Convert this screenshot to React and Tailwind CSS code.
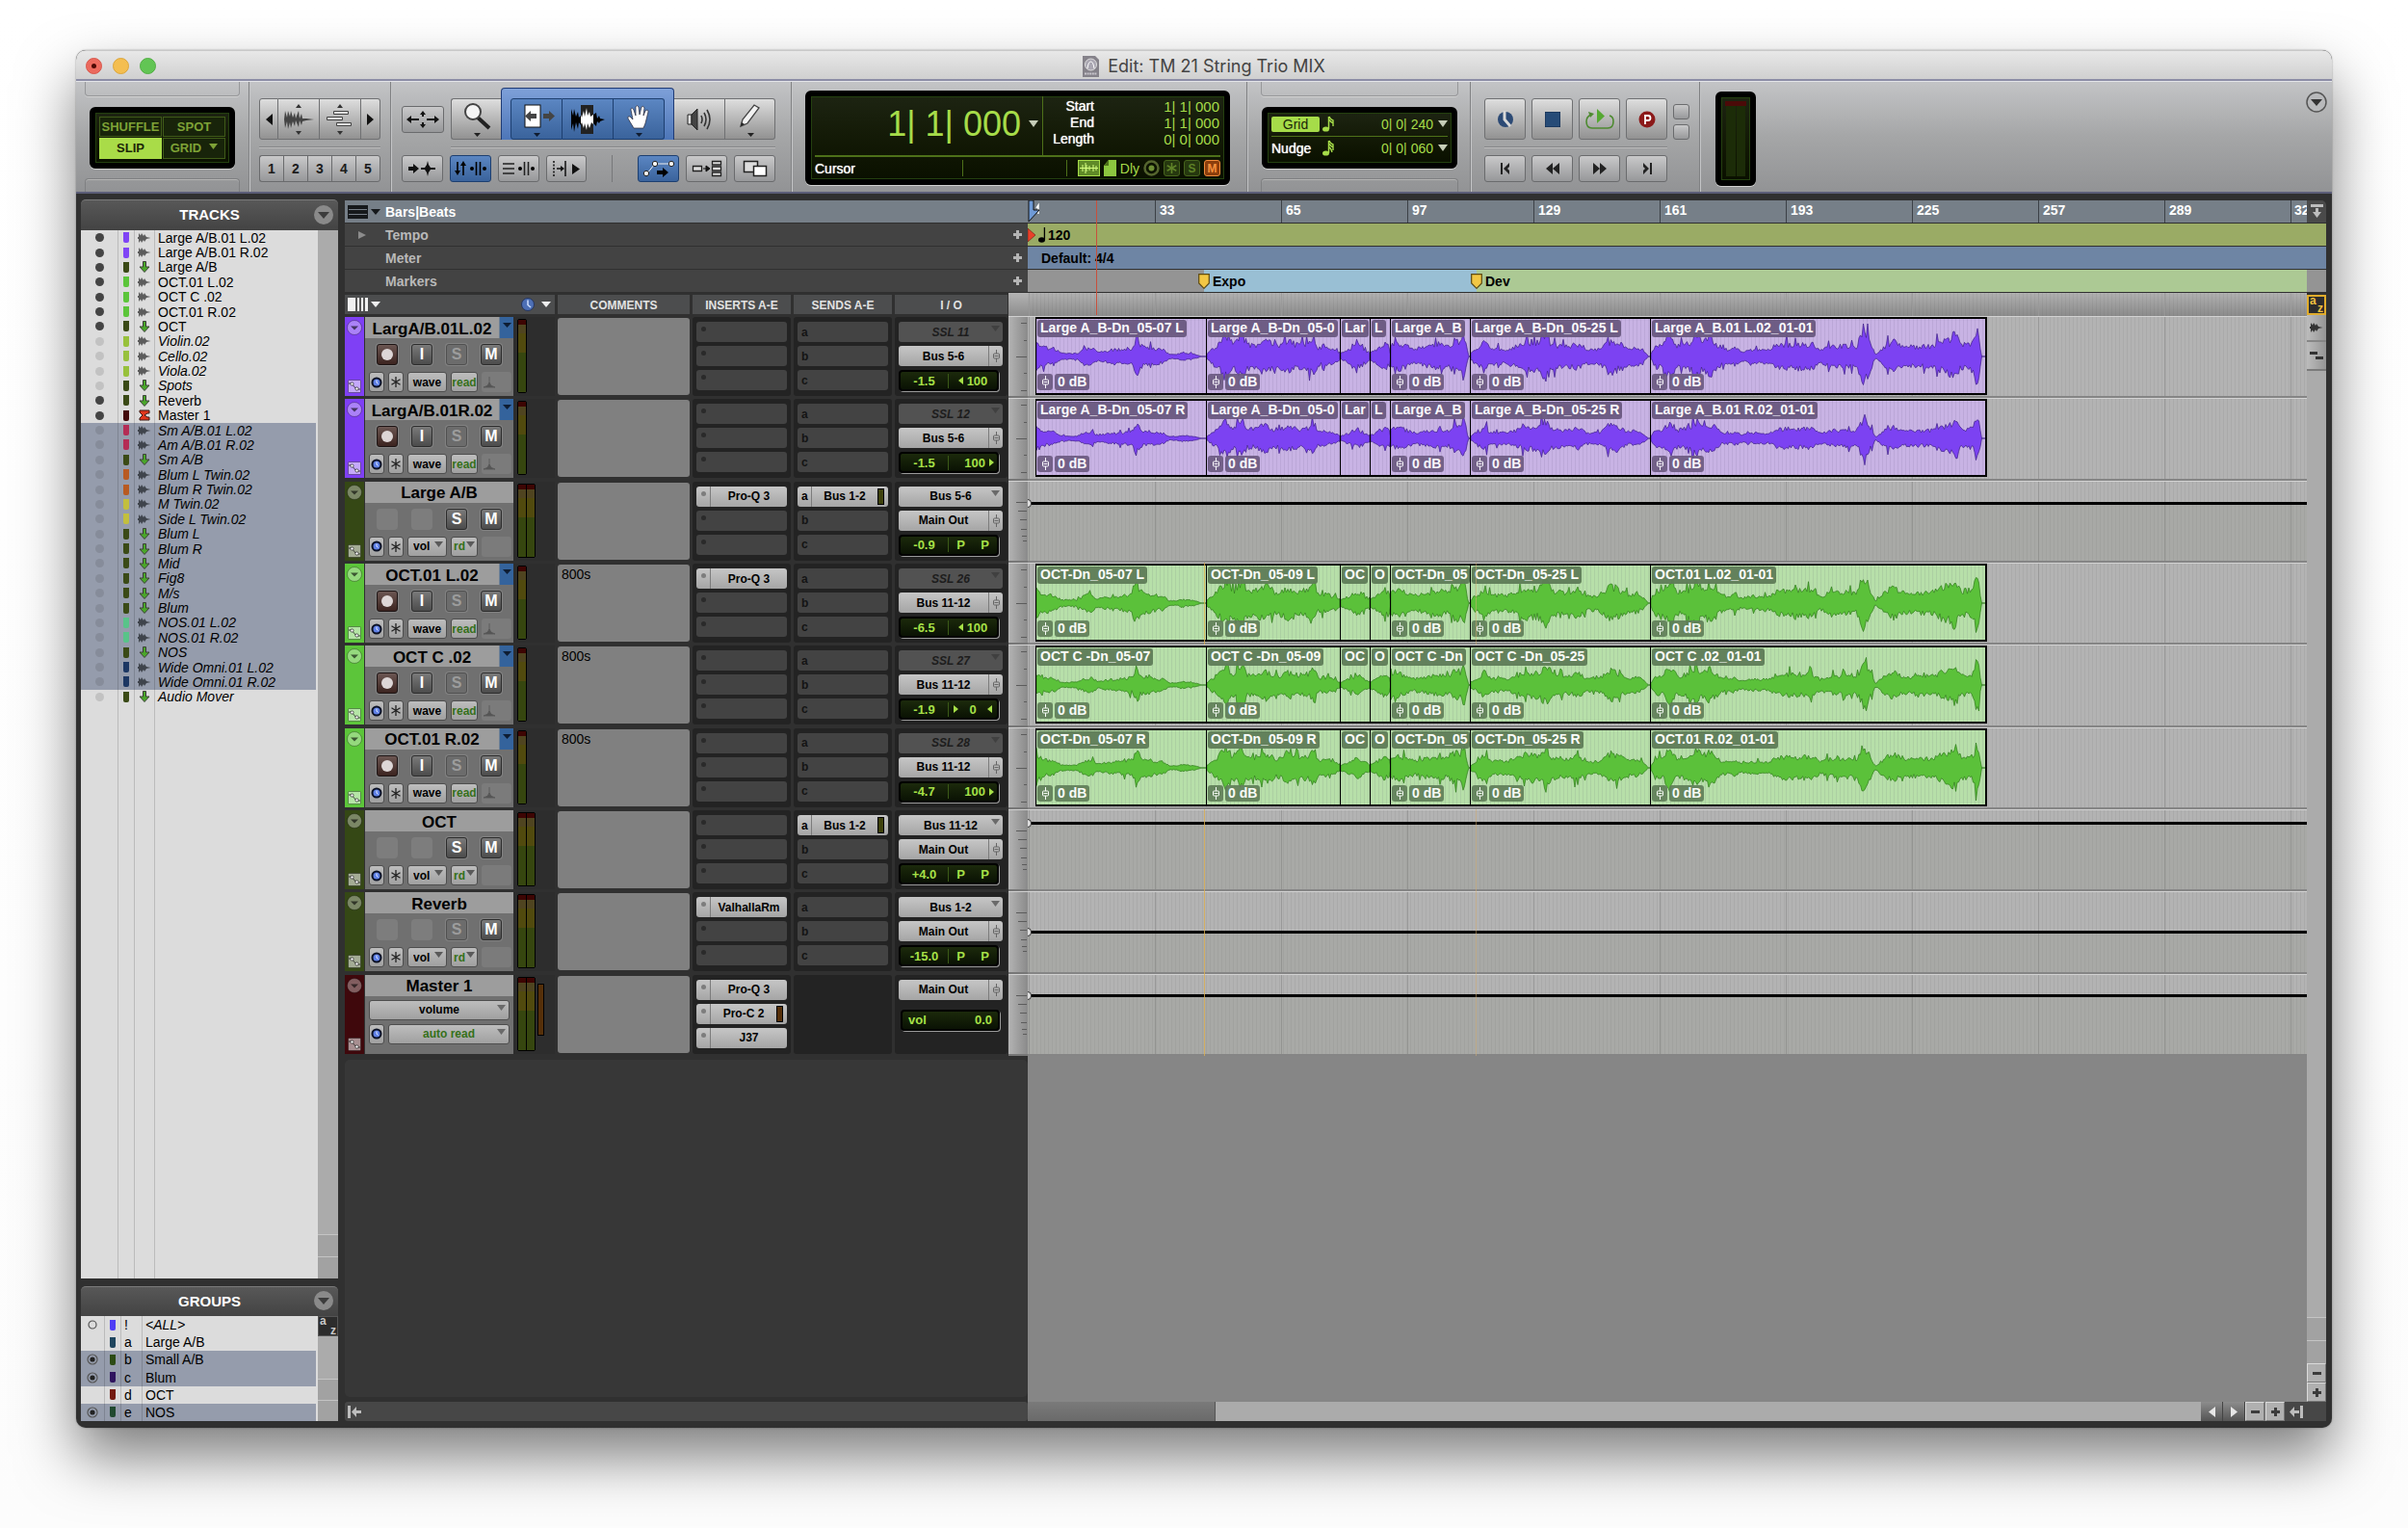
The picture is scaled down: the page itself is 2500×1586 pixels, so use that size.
import React, { useState } from "react";
import clsx from "clsx";

// ── Shared class strings ─────────────────────────────────────────────────────
const KEY = "flex items-center justify-center rounded-[3px] border border-[#6f7072] bg-linear-to-b from-[#dedede] to-[#929292] text-[#222]";
const KEY_SM = "flex items-center justify-center rounded-[3px] border border-[#6a6b6d] bg-linear-to-b from-[#c9c9ca] to-[#97989a] text-[#1c1c1c]";
const KEY_BLUE = "flex items-center justify-center rounded-[3px] border border-[#1d3f70] bg-linear-to-b from-[#5b86c2] to-[#3a639c] text-black";
const LCD = "rounded-[6px] border-[6px] border-black bg-linear-to-b from-[#1d2412] to-[#0a1000] shadow-[0_1px_0_#d0d0d0,inset_0_0_0_1px_#24400f]";
const CHIP = "rounded-[3px] bg-linear-to-b from-[#c6c6c6] to-[#a5a5a5] text-[12px] leading-none font-bold text-black";

// ── Data ─────────────────────────────────────────────────────────────────────
const GREEN = "#3a4a16";
const trackList = [
  ["Large A/B.01 L.02", "#7f44f5", "audio", "on"],
  ["Large A/B.01 R.02", "#7f44f5", "audio", "on"],
  ["Large A/B", GREEN, "aux", "on"],
  ["OCT.01 L.02", "#5cc53a", "audio", "on"],
  ["OCT C .02", "#5cc53a", "audio", "on"],
  ["OCT.01 R.02", "#5cc53a", "audio", "on"],
  ["OCT", GREEN, "aux", "on"],
  ["Violin.02", "#97c13c", "audio", "off"],
  ["Cello.02", "#97c13c", "audio", "off"],
  ["Viola.02", "#97c13c", "audio", "off"],
  ["Spots", GREEN, "aux", "off"],
  ["Reverb", GREEN, "aux", "on"],
  ["Master 1", "#430a0c", "master", "on"],
  ["Sm A/B.01 L.02", "#b42c55", "audio", "sel"],
  ["Am A/B.01 R.02", "#b42c55", "audio", "sel"],
  ["Sm A/B", GREEN, "aux", "sel"],
  ["Blum L Twin.02", "#b85a22", "audio", "sel"],
  ["Blum R Twin.02", "#b85a22", "audio", "sel"],
  ["M Twin.02", "#c2bf3e", "audio", "sel"],
  ["Side L Twin.02", "#c2bf3e", "audio", "sel"],
  ["Blum L", GREEN, "aux", "sel"],
  ["Blum R", GREEN, "aux", "sel"],
  ["Mid", GREEN, "aux", "sel"],
  ["Fig8", GREEN, "aux", "sel"],
  ["M/s", GREEN, "aux", "sel"],
  ["Blum", GREEN, "aux", "sel"],
  ["NOS.01 L.02", "#58c389", "audio", "sel"],
  ["NOS.01 R.02", "#58c389", "audio", "sel"],
  ["NOS", GREEN, "aux", "sel"],
  ["Wide Omni.01 L.02", "#1c3763", "audio", "sel"],
  ["Wide Omni.01 R.02", "#1c3763", "audio", "sel"],
  ["Audio Mover", GREEN, "aux", "off"],
];

const groups = [
  { key: "!", name: "<ALL>", color: "#4f3df5", mark: "empty", selected: false },
  { key: "a", name: "Large A/B", color: "#20465e", mark: "", selected: false },
  { key: "b", name: "Small A/B", color: "#2c4b14", mark: "full", selected: true },
  { key: "c", name: "Blum", color: "#2f145e", mark: "full", selected: true },
  { key: "d", name: "OCT", color: "#741a10", mark: "", selected: false },
  { key: "e", name: "NOS", color: "#20492f", mark: "full", selected: true },
];

const PURPLE_CLIPS = { bg: "bg-[#c8b3e4]", tag: "bg-[#6a5980]", wave: "#7c42f2", edge: "#3c1c86" };
const GREEN_CLIPS = { bg: "bg-[#b7dfa9]", tag: "bg-[#5f7d58]", wave: "#5bc13a", edge: "#2d7a18" };

const tracks = [
  { name: "LargA/B.01L.02", kind: "audio", strip: "bg-[#7f40f5]", input: "SSL 11", output: "Bus 5-6", vol: "-1.5", pan: "left", clips: PURPLE_CLIPS, seed: 3, gain: 1.1,
    names: ["Large A_B-Dn_05-07 L", "Large A_B-Dn_05-0", "Lar", "L", "Large A_B", "Large A_B-Dn_05-25 L", "Large A_B.01 L.02_01-01"] },
  { name: "LargA/B.01R.02", kind: "audio", strip: "bg-[#7f40f5]", input: "SSL 12", output: "Bus 5-6", vol: "-1.5", pan: "right", clips: PURPLE_CLIPS, seed: 8, gain: 0.85,
    names: ["Large A_B-Dn_05-07 R", "Large A_B-Dn_05-0", "Lar", "L", "Large A_B", "Large A_B-Dn_05-25 R", "Large A_B.01 R.02_01-01"] },
  { name: "Large A/B", kind: "aux", strip: "bg-[#354815]", inserts: ["Pro-Q 3"], send: "Bus 1-2", input: "Bus 5-6", output: "Main Out", vol: "-0.9", level: 21 },
  { name: "OCT.01 L.02", kind: "audio", strip: "bg-[#5cc53a]", comment: "800s", inserts: ["Pro-Q 3"], input: "SSL 26", output: "Bus 11-12", vol: "-6.5", pan: "left", clips: GREEN_CLIPS, seed: 14, gain: 1.15,
    names: ["OCT-Dn_05-07 L", "OCT-Dn_05-09 L", "OC", "O", "OCT-Dn_05", "OCT-Dn_05-25 L", "OCT.01 L.02_01-01"] },
  { name: "OCT C .02", kind: "audio", strip: "bg-[#5cc53a]", comment: "800s", input: "SSL 27", output: "Bus 11-12", vol: "-1.9", pan: "center", clips: GREEN_CLIPS, seed: 27, gain: 0.95,
    names: ["OCT C -Dn_05-07", "OCT C -Dn_05-09", "OC", "O", "OCT C -Dn", "OCT C -Dn_05-25", "OCT C .02_01-01"] },
  { name: "OCT.01 R.02", kind: "audio", strip: "bg-[#5cc53a]", comment: "800s", input: "SSL 28", output: "Bus 11-12", vol: "-4.7", pan: "right", clips: GREEN_CLIPS, seed: 31, gain: 1,
    names: ["OCT-Dn_05-07 R", "OCT-Dn_05-09 R", "OC", "O", "OCT-Dn_05", "OCT-Dn_05-25 R", "OCT.01 R.02_01-01"] },
  { name: "OCT", kind: "aux", strip: "bg-[#354815]", send: "Bus 1-2", input: "Bus 11-12", output: "Main Out", vol: "+4.0", level: 12 },
  { name: "Reverb", kind: "aux", strip: "bg-[#354815]", dimSolo: true, inserts: ["ValhallaRm"], input: "Bus 1-2", output: "Main Out", vol: "-15.0", level: 40 },
  { name: "Master 1", kind: "master", strip: "bg-[#3f080c]", inserts: ["Pro-Q 3", "Pro-C 2", "J37"], output: "Main Out", level: 20 },
];

// Clip widths in px plus loudness envelopes as [x, amplitude]
const clipShapes = [
  { w: "w-[177px]", width: 177, env: [[0, 15], [4, 10], [18, 9], [26, 3], [42, 3], [50, 8], [58, 9], [64, 4], [72, 6], [90, 8], [100, 10], [104, 24], [108, 12], [120, 9], [132, 7], [138, 2], [146, 2], [150, 4], [165, 2], [170, 0], [176, 0]] },
  { w: "w-[139px]", width: 139, env: [[0, 2], [6, 9], [12, 14], [20, 26], [28, 13], [37, 28], [42, 14], [50, 13], [60, 20], [72, 11], [84, 17], [96, 13], [106, 15], [112, 22], [115, 9], [122, 10], [132, 7], [138, 4]] },
  { w: "w-[31px]", width: 31, env: [[0, 3], [8, 7], [18, 13], [24, 7], [30, 4]] },
  { w: "w-[21px]", width: 21, env: [[0, 4], [8, 9], [14, 14], [20, 11]] },
  { w: "w-[83px]", width: 83, env: [[0, 13], [8, 15], [16, 12], [24, 8], [36, 11], [52, 13], [60, 11], [66, 18], [72, 18], [76, 26], [79, 12], [80, 0], [82, 0]] },
  { w: "w-[187px]", width: 187, env: [[0, 3], [8, 9], [14, 17], [20, 9], [36, 8], [46, 11], [58, 17], [70, 16], [78, 26], [84, 14], [100, 11], [112, 15], [120, 8], [132, 8], [146, 19], [154, 15], [164, 9], [172, 11], [180, 5], [184, 0], [186, 0]] },
  { w: "w-[350px]", width: 350, env: [[0, 2], [5, 13], [12, 12], [20, 27], [27, 11], [34, 14], [41, 16], [48, 26], [53, 14], [61, 22], [68, 15], [72, 9], [81, 7], [88, 10], [93, 5], [105, 7], [124, 7], [128, 12], [138, 14], [168, 14], [176, 7], [185, 11], [206, 12], [213, 10], [220, 28], [225, 22], [230, 10], [233, 1], [239, 8], [246, 14], [253, 17], [260, 11], [279, 11], [293, 12], [303, 18], [310, 20], [316, 26], [322, 13], [334, 14], [338, 30], [341, 20], [343, 0], [349, 0]] },
];

function envelopeAt(env, x) {
  for (let i = 1; i < env.length; i++) {
    if (x <= env[i][0]) {
      const [x0, a0] = env[i - 1];
      const [x1, a1] = env[i];
      return a0 + ((a1 - a0) * (x - x0)) / (x1 - x0);
    }
  }
  return 0;
}

function wavePath(env, width, seed, gain) {
  let s = seed * 7919 + 13;
  const rnd = () => {
    s = (s * 16807) % 2147483647;
    return s / 2147483647;
  };
  const top = [];
  const bottom = [];
  for (let x = 0; x <= width; x += 1.5) {
    const a = envelopeAt(env, x) * gain;
    const spike = rnd() > 0.92 ? 1.5 : 1;
    const up = a === 0 ? 0 : a * (0.56 + rnd() * 0.42) * spike + 0.5;
    const down = a === 0 ? 0 : a * (0.54 + rnd() * 0.42) * spike + 0.5;
    top.push(`${x} ${(40 - Math.min(up, 34)).toFixed(1)}`);
    bottom.unshift(`${x} ${(40 + Math.min(down, 34)).toFixed(1)}`);
  }
  return `M${top.join("L")}L${bottom.join("L")}Z`;
}

// ── Icons ────────────────────────────────────────────────────────────────────
function Icon({ w, h, children, className }) {
  return (
    <svg width={w} height={h} viewBox={`0 0 ${w} ${h}`} className={className} aria-hidden="true">
      {children}
    </svg>
  );
}

const Down = ({ w = 10, h = 6, className }) => (
  <Icon w={w} h={h} className={className}><path d={`M0 0H${w}L${w / 2} ${h}Z`} fill="currentColor" /></Icon>
);

const PanLeft = () => <Icon w={5} h={8}><path d="M5 0V8L0 4Z" fill="currentColor" /></Icon>;
const PanRight = () => <Icon w={5} h={8}><path d="M0 0V8L5 4Z" fill="currentColor" /></Icon>;

const CircleDown = () => (
  <Icon w={20} h={20}><circle cx="10" cy="10" r="10" fill="#8a8a8a" /><path d="M4 7H16L10 14Z" fill="#3c3c3c" /></Icon>
);

const WaveIcon = ({ color = "#555" }) => (
  <Icon w={14} h={10}><path d="M1 0L3 2.500L4 0L6 3L7 1L9 4L13.500 5L9 6L7 9L6 7L4 10L3 7.500L1 10V6H0V4H1Z" fill={color} /></Icon>
);

function TypeIcon({ kind, selected }) {
  if (kind === "audio") return <WaveIcon color={selected ? "#3f444c" : "#5c5c5c"} />;
  if (kind === "master") return <Icon w={12} h={12}><path d="M1 1H11V4H9L6 6L9 8H11V11H1V9L4 6L1 3Z" fill="#e0361c" stroke="#3a1a14" /></Icon>;
  return <Icon w={12} h={12}><path d="M4.500 .5H7.500V6H11L6 11.500L1 6H4.500Z" fill="#4aa62a" stroke="#3c4038" /></Icon>;
}

const Fader = ({ color = "#555" }) => (
  <Icon w={7} h={13}><path d="M3.500 0V4M3.500 9V13M1.500 6.500H5.500" stroke={color} /><rect x=".5" y="4" width="6" height="5" rx="1" fill="none" stroke={color} /></Icon>
);

const Clock = ({ size = 12 }) => (
  <svg width={size} height={size} viewBox="0 0 12 12" aria-hidden="true"><circle cx="6" cy="6" r="4.500" fill="#5f80e6" stroke="#0a1024" strokeWidth="2" /><path d="M6 3.500V6L7.500 7.500" stroke="#e4ecff" fill="none" /></svg>
);

const Note = ({ flags = 1 }) => (
  <Icon w={12} h={17}>
    <ellipse cx="3.500" cy="14" rx="3.500" ry="2.600" fill="currentColor" />
    <path d="M6.500 14V1" stroke="currentColor" strokeWidth="1.500" />
    {flags > 0 && <path d="M7 1Q8 4 11 5V8M7 4.500Q8 6 11 8V11" stroke="currentColor" fill="none" strokeWidth="1.400" />}
    {flags > 1 && <path d="M7 8Q9 9 10 13" stroke="currentColor" fill="none" strokeWidth="1.400" />}
  </Icon>
);

// ── Toolbar ──────────────────────────────────────────────────────────────────
const NotchTop = () => <div className="h-[15px] rounded-b-[4px] border border-t-0 border-[#97989a] shadow-[0_1px_0_#d2d2d2]" />;
const NotchBottom = () => <div className="h-[14px] rounded-t-[4px] border border-b-0 border-[#7f8082] shadow-[inset_0_1px_0_#b5b5b5]" />;
const Groove = () => <div className="my-[7px] h-[2px] border-b border-[#bdbdbd] bg-[#868789]" />;

function EditModes() {
  const [mode, setMode] = useState("SLIP");
  return (
    <section aria-label="Edit mode" className="flex w-[180px] shrink-0 flex-col justify-between border-r border-[#808183] px-[9px] shadow-[1px_0_0_#c4c5c7]">
      <NotchTop />
      <div className={clsx(LCD, "mx-[5px] h-[64px] p-1")}>
        <div className="grid h-full grid-cols-2 grid-rows-2 gap-px">
          {["SHUFFLE", "SPOT", "SLIP", "GRID"].map((m) => (
            <button key={m} aria-pressed={mode === m} onClick={() => setMode(m)}
              className={clsx("flex items-center justify-center gap-2 border text-[13px] font-bold leading-none",
                mode === m ? "border-[#a9dc48] bg-[#a9dc48] text-[#1c2608]" : "border-[#3f5a18] bg-[#18240a] text-[#7ea236]")}>
              {m}
              {m === "GRID" && <Down w={9} h={6} className="mb-1" />}
            </button>
          ))}
        </div>
      </div>
      <NotchBottom />
    </section>
  );
}

function ZoomControls() {
  return (
    <section aria-label="Zoom" className="w-[147px] shrink-0 border-r border-[#808183] pt-[17px] pr-[10px] pl-[10px] shadow-[1px_0_0_#c4c5c7]">
      <div className="flex h-[43px]">
        <button aria-label="Zoom out" className={clsx(KEY, "w-[20px] rounded-r-none")}><Icon w={7} h={12}><path d="M7 0V12L0 6Z" fill="#111" /></Icon></button>
        <button aria-label="Audio zoom" className={clsx(KEY, "flex-1 rounded-none border-l-0")}>
          <Icon w={32} h={34}>
            <path d="M13 5L16 1L19 5ZM13 29H19L16 33Z" fill="#333" />
            <path d="M2 8L4 15L5 8L7 14L8 8L10 15L12 10L13 16L16 8L17 16L19 11L20 16L24 16L32 17L24 18L20 19L19 23L17 18L16 25L13 18L12 24L10 19L8 26L7 20L5 27L4 19L2 26L1 17Z" fill="#444" />
          </Icon>
        </button>
        <button aria-label="MIDI zoom" className={clsx(KEY, "flex-1 rounded-none border-l-0")}>
          <Icon w={30} h={34}>
            <path d="M12 5L15 1L18 5ZM12 29H18L15 33Z" fill="#333" />
            <path d="M8.500 8.500H23.500V11.500H8.500ZM1.500 14.500H17.500V17.500H1.500ZM11.500 20.500H26.500V23.500H11.500Z" fill="#ddd" stroke="#444" />
          </Icon>
        </button>
        <button aria-label="Zoom in" className={clsx(KEY, "w-[20px] rounded-l-none border-l-0")}><Icon w={7} h={12}><path d="M0 0V12L7 6Z" fill="#111" /></Icon></button>
      </div>
      <Groove />
      <div className="flex h-[28px]">
        {[1, 2, 3, 4, 5].map((n) => (
          <button key={n} className={clsx(KEY_SM, "flex-1 rounded-none border-r-0 text-[14px] font-bold first:rounded-l-[3px] last:rounded-r-[3px] last:border-r")}>{n}</button>
        ))}
      </div>
    </section>
  );
}

function EditTools() {
  return (
    <section aria-label="Edit tools" className="w-[416px] shrink-0 border-r border-[#808183] pt-[6px] pr-[16px] pl-[11px] shadow-[1px_0_0_#c4c5c7]">
      <div className="flex h-[54px] items-end">
        <button aria-label="Zoom toggle" className={clsx(KEY_SM, "mr-[7px] mb-[7px] h-[28px] w-[44px]")}>
          <Icon w={36} h={20}><path d="M3 10H14M22 10H33" stroke="#111" strokeWidth="2" /><path d="M6 6L1 10L6 14ZM30 6L35 10L30 14ZM15 5L18 1L21 5ZM15 15L18 19L21 15Z" fill="#111" /><path d="M18 4V7M18 13V16" stroke="#111" strokeWidth="2" /></Icon>
        </button>
        <button aria-label="Zoomer tool" className={clsx(KEY, "h-[43px] w-[52px] rounded-r-none border-r-0")}>
          <Icon w={32} h={36}><path d="M17 16L29 27" stroke="#222" strokeWidth="4" /><circle cx="12" cy="10" r="8" fill="#f4f4f4" stroke="#444" strokeWidth="2" /><path d="M13 32H20L16.500 36Z" fill="#222" /></Icon>
        </button>
        <div className="flex h-[54px] w-[180px] items-end rounded-t-[4px] border border-b-0 border-[#1f3b75] bg-linear-to-b from-[#7ea0d8] to-[#4d76b8] px-[9px]">
          <button aria-label="Trim tool" className={clsx(KEY_BLUE, "h-[43px] flex-1 rounded-r-none")}>
            <Icon w={40} h={36}><rect x="8" y="3" width="16" height="23" fill="#fff" stroke="#111" /><path d="M8 14.500L14 9V12H20V17H14V20ZM39 14.500L33 9V12H27V17H33V20Z" fill="#444" /><path d="M17 32H24L20.500 36Z" fill="#101c30" /></Icon>
          </button>
          <button aria-label="Selector tool" className={clsx(KEY_BLUE, "h-[43px] flex-1 rounded-none border-l-0")}>
            <Icon w={36} h={32}>
              <rect x="11" y="1" width="13" height="30" fill="#222" />
              <path d="M1 5L3 12L4 5L6 13L8 8L9 14L11 12V22L9 19L8 26L6 19L4 29L3 20L1 27ZM24 11L27 9L28 15L30 12L31 15L36 16L31 18L30 20L28 18L27 23L24 20Z" fill="#000" />
              <path d="M11 11L12 14L14 7L15 13L17 4L18 12L20 8L21 13L24 11V21L22 19L20 25L18 20L17 27L15 20L14 25L12 19L11 21Z" fill="#fff" />
            </Icon>
          </button>
          <button aria-label="Grabber tool" className={clsx(KEY_BLUE, "h-[43px] flex-1 rounded-l-none border-l-0")}>
            <Icon w={26} h={36}><path d="M8 27L2 17Q1 14 4 15L7 18L5 8Q5 5 7.500 7L10 14L10 5Q11 2 13 5L14 13L16 5Q18 3 19 6L18 14L20 9Q23 7 23 10L20 22L18 27Z" fill="#fff" stroke="#223" strokeWidth=".7" /><path d="M10 32H17L13.500 36Z" fill="#101c30" /></Icon>
          </button>
        </div>
        <button aria-label="Scrubber tool" className={clsx(KEY, "h-[43px] w-[53px] rounded-none border-l-0")}>
          <Icon w={28} h={28}><path d="M2 9H6V19H2Z" fill="#ddd" stroke="#222" /><path d="M6 9L12 3V25L6 19Z" fill="#444" stroke="#222" /><path d="M16 10Q18 14 16 18M19 7Q23 14 19 21M22 4Q28 14 22 24" stroke="#333" fill="none" strokeWidth="1.600" /></Icon>
        </button>
        <button aria-label="Pencil tool" className={clsx(KEY, "h-[43px] w-[52px] rounded-l-none border-l-0")}>
          <Icon w={28} h={36}><path d="M4 25L6 18L18 3L23 6L11 22Z" fill="#f2f2f2" stroke="#444" strokeWidth="1.300" /><path d="M4 25L5 21L8 23Z" fill="#222" /><path d="M11 32H18L14.500 36Z" fill="#222" /></Icon>
        </button>
      </div>
      <div className="pl-[51px]"><Groove /></div>
      <div className="flex h-[28px] gap-[7px]">
        <button aria-label="Tab to transients" className={clsx(KEY_SM, "w-[43px]")}><Icon w={30} h={18}><path d="M1 7H6V4L12 9L6 14V11H1ZM14 8H18L20 5L21 1L22 5L24 8H29V10H24L22 13L21 17L20 13L18 10H14Z" fill="#111" /></Icon></button>
        <button aria-label="Link timeline and edit selection" className={clsx(KEY_BLUE, "w-[43px]")}><Icon w={34} h={18}><path d="M4 2V13M10 5V16M23.500 2V16M27.500 2V16" stroke="#000" strokeWidth="1.600" /><path d="M1 11H7L4 16ZM7 6H13L10 1Z" fill="#000" /><circle cx="19" cy="9" r="2" /><circle cx="32" cy="9" r="2" /></Icon></button>
        <button aria-label="Link track and edit selection" className={clsx(KEY_SM, "w-[43px]")}><Icon w={34} h={18}><path d="M1 4H13M1 9H13M1 14H13M23.500 2V16M27.500 2V16" stroke="#222" strokeWidth="1.600" /><circle cx="19" cy="9" r="2" /><circle cx="32" cy="9" r="2" /></Icon></button>
        <button aria-label="Insertion follows playback" className={clsx(KEY_SM, "w-[43px]")}><Icon w={32} h={18}><path d="M3 1V18" stroke="#111" strokeDasharray="2 1.500" strokeWidth="1.500" /><path d="M6 9H11M15 1V17" stroke="#111" strokeWidth="1.500" /><path d="M10 6L14 9L10 12ZM22 4L30 9.500L22 15Z" fill="#111" /></Icon></button>
        <div className="mx-[17px] w-[5px]"><div className="mx-auto h-full w-px bg-[#77787a]" /></div>
        <button aria-label="Automation follows edit" className={clsx(KEY_BLUE, "w-[43px]")}><Icon w={34} h={20}><path d="M4 16L13 5H30" stroke="#eee" fill="none" /><circle cx="4" cy="15" r="2.700" fill="#fff" stroke="#222" /><circle cx="13" cy="5" r="2.700" fill="#fff" stroke="#222" /><circle cx="30" cy="5" r="2.700" fill="#fff" stroke="#222" /><path d="M15 12H21V9L27 14L21 19V16H15Z" fill="#000" /></Icon></button>
        <button aria-label="Mirrored MIDI editing" className={clsx(KEY_SM, "w-[43px]")}><Icon w={32} h={18}><path d="M1.500 6.500H10.500V11.500H1.500ZM21.500 1.500H30.500V5H21.500ZM21.500 7H30.500V11H21.500ZM21.500 13H30.500V16.500H21.500Z" fill="#ddd" stroke="#222" strokeWidth="1.300" /><path d="M12 9H16M15 6L19 9L15 12Z" stroke="#111" fill="#111" /></Icon></button>
        <button aria-label="Layered editing" className={clsx(KEY_SM, "w-[43px]")}><Icon w={28} h={20}><path d="M2.500 2.500H16.500V13.500H2.500Z" fill="#ddd" stroke="#222" strokeWidth="1.500" /><path d="M12.500 7.500H25.500V17.500H12.500Z" fill="#fff" stroke="#222" strokeWidth="1.500" /></Icon></button>
      </div>
    </section>
  );
}

function Counter() {
  const rows = [["Start", "1| 1| 000"], ["End", "1| 1| 000"], ["Length", "0| 0| 000"]];
  return (
    <section aria-label="Counters" className="w-[473px] shrink-0 border-r border-[#808183] pt-[9px] pr-[17px] pl-[14px] shadow-[1px_0_0_#c4c5c7]">
      <div className={clsx(LCD, "flex h-[98px] flex-col px-1 text-[#a6dc49]")}>
        <div className="flex h-[63px] border-b-2 border-[#4d7019]">
          <div className="flex flex-1 items-center justify-end gap-2 border-r border-[#4d7019] pr-1 pb-1">
            <span className="text-[36px] leading-none">1| 1| 000</span>
            <button aria-label="Counter format" className="text-[#c6cdb8]"><Down w={10} h={7} /></button>
          </div>
          <dl className="w-[184px] py-[2px] pr-[1px] text-[15px] leading-[17px]">
            {rows.map(([k, v]) => (
              <div key={k} className="flex justify-between">
                <dt className="w-[53px] text-right text-[14px] text-white [text-shadow:0_0_1px_white]">{k}</dt>
                <dd>{v}</dd>
              </div>
            ))}
          </dl>
        </div>
        <div className="flex flex-1 items-center text-[14px] leading-none">
          <span className="w-[153px] text-white [text-shadow:0_0_1px_white]">Cursor</span>
          <span className="h-[17px] w-[109px] border-x border-[#4d7019]" />
          <div className="flex flex-1 items-center justify-end gap-1">
            <Icon w={23} h={17}><rect x=".5" y=".5" width="22" height="16" fill="#5f8a28" stroke="#a6dc49" /><path d="M2 8.500H21M5 5V12M8 3V14M9 5V12M12 6V11M16 5V12M19 6V11" stroke="#d6ff80" /></Icon>
            <Icon w={13} h={17}><path d="M5 0H13V17H0V6Z" fill="#8cc63f" /><path d="M5 0V6H0" fill="#4d7019" /></Icon>
            <span>Dly</span>
            <Icon w={17} h={17}><circle cx="8.500" cy="8.500" r="7" fill="none" stroke="#55652e" strokeWidth="2.500" /><circle cx="8.500" cy="8.500" r="3" fill="#6e8e34" /></Icon>
            <span className="flex h-[17px] w-[17px] items-center justify-center rounded-[3px] border border-[#46631c] bg-[#26380f] text-[#5f8228]"><Icon w={11} h={11}><path d="M5.500 0V11M.7 2.700L10.300 8.300M.7 8.300L10.300 2.700" stroke="currentColor" strokeWidth="1.600" /></Icon></span>
            <span className="flex h-[17px] w-[17px] items-center justify-center rounded-[3px] border border-[#46631c] bg-[#26380f] text-[12px] font-bold text-[#5f8228]">S</span>
            <span className="flex h-[17px] w-[17px] items-center justify-center rounded-[3px] border border-[#ef8a3a] bg-[#8c3e0c] text-[12px] font-bold text-[#f7913e]">M</span>
          </div>
        </div>
      </div>
    </section>
  );
}

function GridNudge() {
  return (
    <section aria-label="Grid and nudge" className="flex w-[232px] shrink-0 flex-col justify-between border-r border-[#808183] pr-[12px] pl-[14px] shadow-[1px_0_0_#c4c5c7]">
      <NotchTop />
      <div className={clsx(LCD, "mx-px flex h-[64px] flex-col px-1 pb-[3px] text-[14px] leading-none text-[#a6dc49]")}>
        <div className="flex flex-1 items-center border-b border-[#4d7019]">
          <button className="mr-[3px] h-[16px] w-[50px] rounded-[2px] bg-[#a6dc49] leading-none text-[#1b2608]">Grid</button>
          <Note />
          <select aria-label="Grid value" className="ml-auto appearance-none text-right"><option>0| 0| 240</option></select>
          <Down w={10} h={7} className="ml-[5px] text-[#c6cdb8]" />
        </div>
        <div className="flex flex-1 items-center">
          <span className="w-[53px] text-white [text-shadow:0_0_1px_white]">Nudge</span>
          <Note flags={2} />
          <select aria-label="Nudge value" className="ml-auto appearance-none text-right"><option>0| 0| 060</option></select>
          <Down w={10} h={7} className="ml-[5px] text-[#c6cdb8]" />
        </div>
      </div>
      <NotchBottom />
    </section>
  );
}

function Transport() {
  return (
    <section aria-label="Transport" className="flex w-[238px] shrink-0 gap-[6px] border-r border-[#808183] pt-[17px] pl-[14px] shadow-[1px_0_0_#c4c5c7]">
      <div className="w-[190px]">
        <div className="grid h-[43px] grid-cols-4 gap-[6px]">
          <button aria-label="Online" className={KEY}><Icon w={18} h={18}><circle cx="9" cy="9" r="8" fill="#2c4a75" /><path d="M8 0V9L14 16" stroke="#d8d8d8" strokeWidth="3" fill="none" /></Icon></button>
          <button aria-label="Stop" className={KEY}><Icon w={16} h={16}><rect width="16" height="16" fill="#264b77" stroke="#132a4a" /></Icon></button>
          <button aria-label="Play" className={KEY}><Icon w={32} h={22}><path d="M7 6Q2 8 2 13Q2 20 8 20H24Q30 20 30 13Q30 8 26 7" fill="none" stroke="#4d8a30" strokeWidth="1.600" /><path d="M4 3L10 5L6 9Z" fill="#4d8a30" /><path d="M13 0L21 7.500L13 15Z" fill="#55a832" /></Icon></button>
          <button aria-label="Record" className={KEY}><Icon w={18} h={18}><circle cx="9" cy="9" r="8.500" fill="#8c1a1a" /><path d="M7 14V5H10Q12.500 5 12.500 7.500Q12.500 10 10 10H7" fill="none" stroke="#fff" strokeWidth="1.800" /></Icon></button>
        </div>
        <Groove />
        <div className="grid h-[28px] grid-cols-4 gap-[6px]">
          <button aria-label="Return to zero" className={KEY_SM}><Icon w={10} h={12}><path d="M0 0H2V12H0ZM9 0V4L7 6L9 8V12L3 6Z" fill="#222" /></Icon></button>
          <button aria-label="Rewind" className={KEY_SM}><Icon w={14} h={12}><path d="M7 0V12L0 6ZM14 0V12L7 6Z" fill="#222" /></Icon></button>
          <button aria-label="Fast forward" className={KEY_SM}><Icon w={14} h={12}><path d="M0 0V12L7 6ZM7 0V12L14 6Z" fill="#222" /></Icon></button>
          <button aria-label="Go to end" className={KEY_SM}><Icon w={10} h={12}><path d="M8 0H10V12H8ZM1 0V4L3 6L1 8V12L7 6Z" fill="#222" /></Icon></button>
        </div>
      </div>
      <div className="flex flex-col gap-[5px] pt-[6px]">
        <button aria-label="Input monitor" className={clsx(KEY_SM, "h-[16px] w-[17px]")} />
        <button aria-label="Metronome" className={clsx(KEY_SM, "h-[16px] w-[17px]")} />
      </div>
    </section>
  );
}

function Toolbar() {
  return (
    <div className="flex h-[117px] border-t border-[#e4e4e8] border-b-2 border-b-[#5c5e78] bg-linear-to-b from-[#c3c4c6] via-[#a5a6a7] to-[#929395]">
      <EditModes />
      <ZoomControls />
      <EditTools />
      <Counter />
      <GridNudge />
      <Transport />
      <div className="flex flex-1 items-start justify-between pt-[10px] pr-[5px] pl-[16px]">
        <div className={clsx(LCD, "h-[98px] w-[42px] p-1")}>
          <div className="flex h-full gap-px border-t-[5px] border-[#4b0a08] px-px">
            <div className="flex-1 bg-[#1c2c08]" /><div className="flex-1 bg-[#1c2c08]" />
          </div>
        </div>
        <button aria-label="Toolbar menu"><Icon w={22} h={22}><circle cx="11" cy="11" r="10" fill="#b8b9bb" stroke="#555" strokeWidth="1.500" /><path d="M5 8H17L11 15Z" fill="#333" /></Icon></button>
      </div>
    </div>
  );
}

// ── Side lists ───────────────────────────────────────────────────────────────
function PanelHeader({ title, className }) {
  return (
    <header className={clsx("grid shrink-0 grid-cols-[20px_1fr_20px] items-center rounded-t-[5px] border-t border-[#7a7a7a] bg-linear-to-b from-[#585858] to-[#434343] px-[5px] pb-[2px]", className)}>
      <span />
      <h2 className="text-center text-[15px] leading-none font-bold text-white">{title}</h2>
      <button aria-label={`${title} menu`}><CircleDown /></button>
    </header>
  );
}

function Sidebar() {
  return (
    <aside className="flex w-[267px] shrink-0 flex-col">
      <PanelHeader title="TRACKS" className="h-[32px]" />
      <div className="flex flex-1 bg-[#dcdcdc]">
        <div className="flex flex-1 flex-col">
          <ul className="grid h-[492px] auto-rows-fr text-[14px] leading-none text-black">
            {trackList.map(([name, color, kind, state]) => (
              <li key={name} className={clsx("mr-[2px] grid grid-cols-[39px_17px_21px_1fr]", state === "sel" && "bg-[#959cac]")}>
                <span className="flex items-center justify-center border-r border-black/15">
                  <span className={clsx("h-[9px] w-[9px] rounded-full", state === "on" ? "bg-[#444]" : state === "off" ? "bg-[#c2c2c2]" : "bg-[#868c9a]")} />
                </span>
                <span className="flex items-center justify-center border-r border-black/15">
                  <span className="h-[11px] w-[6px] rounded-b-[2px]" style={{ background: color }} />
                </span>
                <span className="flex items-center justify-center border-r border-black/15"><TypeIcon kind={kind} selected={state === "sel"} /></span>
                <span className={clsx("self-center pl-[3px] whitespace-nowrap", state !== "on" && "italic")}>{name}</span>
              </li>
            ))}
          </ul>
          <div className="mr-[2px] grid flex-1 grid-cols-[39px_17px_21px_1fr]">
            <span className="border-r border-black/15" /><span className="border-r border-black/15" /><span className="border-r border-black/15" />
          </div>
        </div>
        <div className="flex w-[21px] flex-col justify-end bg-[#ababab]">
          <div className="h-[23px] border-t border-[#c4c4c4] bg-[#a2a2a2]" />
          <div className="h-[23px] border-t border-[#c4c4c4] bg-[#a2a2a2]" />
        </div>
      </div>

      <PanelHeader title="GROUPS" className="mt-2 h-[31px]" />
      <div className="flex bg-[#dcdcdc]">
        <ul className="grid h-[109px] flex-1 auto-rows-fr text-[14px] leading-none text-black">
          {groups.map((g) => (
            <li key={g.key} className={clsx("mr-[2px] grid grid-cols-[25px_17px_22px_1fr]", g.selected && "bg-[#959cac]")}>
              <span className="flex items-center justify-center border-r border-black/15">
                {g.mark && <Icon w={12} h={12}><circle cx="6" cy="6" r={g.mark === "full" ? 5 : 4} fill="none" stroke="#555" strokeWidth="1.200" />{g.mark === "full" && <circle cx="6" cy="6" r="2.600" fill="#222" />}</Icon>}
              </span>
              <span className="flex items-center justify-center border-r border-black/15"><span className="h-[11px] w-[6px] rounded-b-[2px]" style={{ background: g.color }} /></span>
              <span className="flex items-center border-r border-black/15 pl-[3px]">{g.key}</span>
              <span className={clsx("self-center pl-[3px]", g.key === "!" && "italic")}>{g.name}</span>
            </li>
          ))}
        </ul>
        <div className="flex w-[21px] flex-col justify-between bg-[#ababab]">
          <AzButton className="border-[#555] text-[#c8c8c8]" />
          <div><div className="h-[22px] border-t border-[#c4c4c4] bg-[#a2a2a2]" /><div className="h-[22px] border-t border-[#c4c4c4] bg-[#a2a2a2]" /></div>
        </div>
      </div>
    </aside>
  );
}

function AzButton({ className }) {
  return (
    <button aria-label="Keyboard focus" className={clsx("flex h-[21px] w-full shrink-0 justify-between border bg-[#2c2c2c] px-px text-[12px] leading-none font-bold", className)}>
      <span className="leading-[8px]">a</span><span className="self-end leading-[9px]">z</span>
    </button>
  );
}

// ── Rulers ───────────────────────────────────────────────────────────────────
function Rulers() {
  const rowLabel = "flex h-[23px] w-[709px] shrink-0 items-center pr-[6px] text-[14px] leading-none font-bold";
  const Plus = () => <Icon w={9} h={9} className="ml-auto"><path d="M3 0H6V3H9V6H6V9H3V6H0V3H3Z" fill="#b4b4b4" /></Icon>;
  return (
    <div className="flex flex-col gap-px pb-px">
      <div className="flex h-[23px]">
        <div className={clsx(rowLabel, "bg-[#767f88] pl-[3px] text-white")}>
          <button aria-label="Ruler view" className="flex items-center gap-[3px] text-[#16191c]">
            <Icon w={21} h={14}><rect width="21" height="14" fill="#16191c" /><path d="M1 4.500H20M1 9.500H20" stroke="#767f88" strokeWidth="1.200" /></Icon>
            <Down w={10} h={6} />
          </button>
          <span className="pl-[5px]">Bars|Beats</span>
        </div>
        <div className="flex flex-1 overflow-hidden bg-[#767f88] text-[14px] leading-[20px] font-bold text-white">
          <div className="w-[132px] shrink-0">
            <Icon w={13} h={23}><path d="M9 8L11 5V14" stroke="#fff" strokeWidth="1.500" fill="none" /><path d="M1 0H6V10H12L1 22Z" fill="#6f9ad6" stroke="#111" /></Icon>
          </div>
          {[33, 65, 97, 129, 161, 193, 225, 257, 289].map((n) => (
            <span key={n} className="w-[131px] shrink-0 border-l border-[#3c4147] pl-1">{n}</span>
          ))}
          <span className="min-w-0 flex-1 overflow-hidden border-l border-[#3c4147] pl-[3px]">321</span>
        </div>
        <button aria-label="Scroll mode" className="flex w-[20px] items-center justify-center rounded-tr-[5px] bg-[#4a4a4a]"><Icon w={13} h={15}><path d="M0 0H13V3H0ZM5 4H8V8H11L6.500 14L2 8H5Z" fill="#bdbdbd" /></Icon></button>
      </div>

      <div className="flex h-[23px]">
        <div className={clsx(rowLabel, "bg-[#434343] text-[#b9b9b9]")}>
          <Icon w={42} h={10}><path d="M14 1L22 5L14 9Z" fill="#8c8c8c" /></Icon>Tempo<Plus />
        </div>
        <div className="flex flex-1 items-center gap-[1px] bg-[#9aab65] text-[14px] leading-none font-bold text-black">
          <Icon w={8} h={14}><path d="M0 0L8 7L0 14Z" fill="#e8402a" stroke="#6a1c10" strokeWidth=".6" /></Icon>
          <Icon w={9} h={16} className="ml-[2px]"><ellipse cx="3.500" cy="13" rx="3.500" ry="2.700" /><path d="M6.400 13V0" stroke="#000" strokeWidth="1.300" /></Icon>
          <span>120</span>
        </div>
      </div>

      <div className="flex h-[23px]">
        <div className={clsx(rowLabel, "bg-[#434343] pl-[42px] text-[#b9b9b9]")}>Meter<Plus /></div>
        <div className="flex flex-1 items-center bg-[#6e85a4] pl-[14px] text-[14px] leading-none font-bold text-black">Default: 4/4</div>
      </div>

      <div className="flex h-[23px]">
        <div className={clsx(rowLabel, "bg-[#434343] pl-[42px] text-[#b9b9b9]")}>Markers<Plus /></div>
        <div className="flex flex-1 text-[14px] leading-none font-bold text-black">
          <div className="w-[177px] bg-[#949494]" />
          <Marker name="Expo" className="w-[283px] bg-[linear-gradient(90deg,#949494_6px,#99bfd4_6px)]" />
          <Marker name="Dev" className="flex-1 bg-[linear-gradient(90deg,#99bfd4_6px,#acc994_6px)]" />
          <div className="w-[20px] bg-[#949494]" />
        </div>
      </div>
    </div>
  );
}

const Marker = ({ name, className }) => (
  <div className={clsx("flex items-center gap-[3px]", className)}>
    <Icon w={12} h={16}><path d="M.7 .7H11.300V10L6 15.300L.7 10Z" fill="#f2c744" stroke="#5c4a14" strokeWidth="1.200" /></Icon>{name}
  </div>
);

// ── Track controls ───────────────────────────────────────────────────────────
function Pick({ label, value, className, arrow = "text-[#6a6a6a]", hideArrow }) {
  return (
    <div className={clsx("relative", className)}>
      <select aria-label={label} className="h-full w-full appearance-none px-[6px] leading-none [text-align-last:center]" defaultValue={value}>
        <option>{value}</option>
      </select>
      {!hideArrow && <Down w={9} h={6} className={clsx("pointer-events-none absolute top-[4px] right-[3px]", arrow)} />}
    </div>
  );
}

const SMALL_CHIP = "h-[21px] rounded-[3px] border border-[#4e4e4e] bg-linear-to-b from-[#bdbdbd] to-[#a0a0a0] text-[12px] leading-none font-bold";
const STATE_BTN = "flex h-[22px] w-[22px] items-center justify-center rounded-[3px] border text-[16px] leading-none font-bold shadow-[0_0_0_1px_#828282]";
const STATE_ON = "border-[#2c2c2c] bg-linear-to-b from-[#7a7a7a] to-[#4c4c4c] text-white";
const STATE_DIM = "border-[#505050] bg-[#6c6c6c] text-[#9c9c9c]";

function TrackHeader({ track }) {
  const audio = track.kind === "audio";
  return (
    <div className="flex h-[82px] w-[175px]">
      <div className={clsx("mr-px flex w-[20px] flex-col items-center justify-between pt-[3px] pb-[3px]", track.strip)}>
        <Icon w={16} h={16}><circle cx="8" cy="8" r="7.500" fill="#fff" fillOpacity=".35" stroke="#000" strokeOpacity=".3" /><path d="M4 6.500H12L8 10.500Z" fill="#000" fillOpacity=".6" /></Icon>
        <Icon w={14} h={14}><rect x=".5" y=".5" width="13" height="13" rx="1" fill="#fff" fillOpacity=".55" stroke="#000" strokeOpacity=".35" /><path d="M1 4H4L9 10H13" stroke="#222" fill="none" strokeOpacity=".8" /><circle cx="4.500" cy="4.500" r="1.600" fill="#fff" stroke="#333" strokeWidth=".8" /><circle cx="9.500" cy="9.500" r="1.600" fill="#fff" stroke="#333" strokeWidth=".8" /></Icon>
      </div>
      <div className="flex-1 bg-[#707070]">
        <div className="flex h-[22px] bg-[#9d9d9d]">
          <button className="flex-1 pt-[2px] text-center text-[17px] leading-none font-bold text-black">{track.name}</button>
          {audio && <button aria-label="Playlists" className="flex w-[15px] justify-center border-l border-[#6c7f95] bg-[#34639c] pt-[6px] text-[#0e1d33]"><Down w={9} h={5} /></button>}
        </div>
        {track.kind === "master" ? (
          <div className="flex flex-col gap-1 px-1 pt-[4px]">
            <Pick label="Track view" value="volume" className={clsx(SMALL_CHIP, "text-black")} />
            <div className="flex gap-1">
              <button aria-label="Timebase" className={clsx(SMALL_CHIP, "flex w-[16px] shrink-0 items-center justify-center")}><Clock /></button>
              <Pick label="Automation mode" value="auto read" className={clsx(SMALL_CHIP, "flex-1 text-[#35701a]")} />
            </div>
          </div>
        ) : (
          <>
            <div className="flex gap-[14px] pt-[6px] pl-3">
              {audio ? (
                <>
                  <button aria-label="Record enable" className={clsx(STATE_BTN, "border-[#1c1414] bg-linear-to-b from-[#6b5652] to-[#3c2420]")}><span className="h-[12px] w-[12px] rounded-full bg-[#ddd6d6]" /></button>
                  <button className={clsx(STATE_BTN, STATE_ON)}>I</button>
                </>
              ) : (
                <><span className="h-[22px] w-[22px] rounded-[4px] bg-[#7d7d7d]" /><span className="h-[22px] w-[22px] rounded-[4px] bg-[#7d7d7d]" /></>
              )}
              <button className={clsx(STATE_BTN, audio || track.dimSolo ? STATE_DIM : STATE_ON)}>S</button>
              <button className={clsx(STATE_BTN, STATE_ON)}>M</button>
            </div>
            <div className="flex gap-1 pt-[7px] pl-1">
              <button aria-label="Timebase" className={clsx(SMALL_CHIP, "flex w-[16px] items-center justify-center")}><Clock /></button>
              <button aria-label="Elastic audio" className={clsx(SMALL_CHIP, "flex w-[16px] items-center justify-center")}><Icon w={10} h={11}><path d="M5 0V11M.5 2.700L9.500 8.300M.5 8.300L9.500 2.700" stroke="#222" strokeWidth="1.300" /></Icon></button>
              {audio ? (
                <>
                  <button className={clsx(SMALL_CHIP, "w-[41px] text-black")}>wave</button>
                  <button className={clsx(SMALL_CHIP, "flex w-[28px] items-center justify-center text-[#35701a]")}>read</button>
                  <span className="flex h-[21px] w-[31px] items-center rounded-[3px] bg-[#7b7b7b] pl-[2px]"><Icon w={12} h={12}><path d="M6 0V8M0 11Q5 10 6 6Q7 10 12 11Z" stroke="#555" fill="#555" strokeWidth=".8" /></Icon></span>
                </>
              ) : (
                <>
                  <div className={clsx(SMALL_CHIP, "relative w-[41px] text-black")}>
                    <select aria-label="Track view" className="h-full w-full appearance-none pl-[5px] leading-none"><option>vol</option></select>
                    <Down w={9} h={6} className="pointer-events-none absolute top-[4px] right-[3px] text-[#5a5a5a]" />
                  </div>
                  <div className={clsx(SMALL_CHIP, "relative w-[28px] text-[#35701a]")}>
                    <select aria-label="Automation mode" className="h-full w-full appearance-none pl-[2px] leading-none"><option>rd</option></select>
                    <Down w={9} h={6} className="pointer-events-none absolute top-[4px] right-[2px] text-[#5a5a5a]" />
                  </div>
                  <span className="h-[21px] w-[31px] rounded-[3px] bg-[#7b7b7b]" />
                </>
              )}
            </div>
          </>
        )}
      </div>
    </div>
  );
}

const MeterBar = () => (
  <div className="h-full w-[8px] bg-[linear-gradient(#3d0503_0_5px,#4f4420_5px_14px,#514a0e_14px_34px,#36460f_34px)]" />
);

function Meter({ track }) {
  return (
    <div className="flex h-[82px] w-[43px] items-start gap-[2px] bg-[#2d2d2d] pt-[2px] pl-1">
      <div className="flex h-[77px] gap-px rounded-[2px] border border-black bg-black">
        <MeterBar />
        {track.kind !== "audio" && <MeterBar />}
      </div>
      {track.kind === "master" && <div className="mt-[7px] h-[54px] w-[7px] border border-black bg-[#56300a]" />}
    </div>
  );
}

function InsertSlot({ name }) {
  if (!name) return <button aria-label="Empty insert" className="flex h-[21px] items-start rounded-[3px] bg-[#434343] pt-[5px] pl-[5px]"><span className="h-[5px] w-[5px] rounded-full bg-[#2a2a2a]" /></button>;
  return (
    <button className={clsx(CHIP, "flex h-[21px]")}>
      <span className="h-full w-[15px] border-r border-[#7c7c7c] pt-[5px] pl-[5px]"><span className="block h-[5px] w-[5px] rounded-full bg-[#7d7d7d]" /></span>
      <span className="flex-1 self-center text-center">{name}</span>
      {name === "Pro-C 2" && <span className="mr-1 h-[17px] w-[7px] self-center border border-black bg-[#56300a]" />}
    </button>
  );
}

function SendSlot({ letter, name }) {
  if (!name) return <button className="h-[21px] rounded-[3px] bg-[#434343] pl-[4px] text-left text-[12px] leading-none font-bold text-[#141414]">{letter}</button>;
  return (
    <button className={clsx(CHIP, "flex h-[21px] items-center")}>
      <span className="flex h-full w-[15px] items-center border-r border-[#7c7c7c] pl-[4px]">{letter}</span>
      <span className="flex-1">{name}</span>
      <span className="mr-1 h-[17px] w-[7px] border border-black bg-[#3f420c]" />
    </button>
  );
}

function OutputSlot({ name }) {
  return (
    <div className={clsx(CHIP, "flex h-[21px]")}>
      <Pick label="Output" value={name} hideArrow className="flex-1" />
      <button aria-label="Output window" className="flex w-[15px] items-center justify-center border-l border-[#7c7c7c]"><Fader color="#666" /></button>
    </div>
  );
}

const MINI_LCD = "flex h-[22px] items-center rounded-[4px] border-2 border-black bg-linear-to-b from-[#1c2a0c] to-[#0a1204] text-[13px] leading-none font-bold text-[#a6e047] shadow-[1px_1px_0_#9a9a9a]";

function PanReadout({ pan }) {
  if (pan === "left") return <span className="flex flex-1 items-center justify-center gap-[4px]"><PanLeft />100</span>;
  if (pan === "right") return <span className="flex flex-1 items-center justify-end gap-[4px] pr-[3px]">100<PanRight /></span>;
  if (pan === "center") return <span className="flex flex-1 items-center justify-around"><PanRight />0<PanLeft /></span>;
  return <span className="flex flex-1 justify-around"><span>P</span><span>P</span></span>;
}

function IoColumn({ track }) {
  if (track.kind === "master") {
    return (
      <>
        <OutputSlot name={track.output} />
        <div className={clsx(MINI_LCD, "mt-[6px] mr-[3px] ml-[2px] justify-between px-[6px]")}><span>vol</span><span>0.0</span></div>
      </>
    );
  }
  const audio = track.kind === "audio";
  return (
    <>
      <Pick label="Input" value={track.input} arrow={audio ? "text-[#404040]" : "text-[#6a6a6a]"}
        className={clsx("h-[21px] text-[12px] font-bold", audio ? "rounded-[3px] bg-[#525252] text-[#1d1d1d] italic" : CHIP)} />
      <OutputSlot name={track.output} />
      <div className={clsx(MINI_LCD, "mr-1")}>
        <span className="w-[50px] border-r border-[#3b5a18] py-px text-center">{track.vol}</span>
        <PanReadout pan={track.pan} />
      </div>
    </>
  );
}

function ScaleTicks({ audio }) {
  const ticks = audio ? [[7, 6], [25, 3], [42, 11], [59, 3], [77, 6]] : [[22, 11], [31, 9], [40, 7], [50, 6], [57, 5], [62, 4]];
  return (
    <div className="h-full w-[20px] border-t border-b-2 border-t-[#d0d0d0] border-b-[#777] bg-linear-to-r from-[#b4b4b4] to-[#8a8a8a]">
      <Icon w={20} h={82}>{ticks.map(([y, w]) => <path key={y} d={`M${19 - w} ${y - 0.5}H19`} stroke="#5c5c5c" />)}</Icon>
    </div>
  );
}

function TrackControls({ track }) {
  const slots = "flex h-[82px] flex-col gap-[4px] rounded-[3px] bg-[#232323] px-1 pt-[5px]";
  return (
    <div className="flex w-[709px] shrink-0 items-stretch">
      <div className="flex w-[689px] gap-[3px] pt-px">
        <div className="flex"><TrackHeader track={track} /><Meter track={track} /></div>
        <textarea aria-label={`${track.name} comments`} defaultValue={track.comment} className="mt-px h-[80px] w-[137px] resize-none rounded-[3px] bg-[#808080] px-[4px] pt-[1px] text-[14px] leading-[18px] text-black" />
        <div className={clsx(slots, "w-[102px]")}>{[0, 1, 2].map((i) => <InsertSlot key={i} name={track.inserts?.[i]} />)}</div>
        <div className={clsx(slots, "w-[102px]")}>{track.kind !== "master" && ["a", "b", "c"].map((l) => <SendSlot key={l} letter={l} name={l === "a" ? track.send : undefined} />)}</div>
        <div className={clsx(slots, "w-[117px] pr-[5px]")}><IoColumn track={track} /></div>
      </div>
      <ScaleTicks audio={track.kind === "audio"} />
    </div>
  );
}

// ── Timeline lanes ───────────────────────────────────────────────────────────
function Clip({ shape, name, palette, seed, gain }) {
  return (
    <div className={clsx("relative flex h-[81px] shrink-0 flex-col justify-between overflow-hidden border-y-2 border-l border-black pt-px pb-[3px] pl-px last:border-r-2", shape.w, palette.bg)}>
      <div className="absolute inset-0 bg-[repeating-linear-gradient(90deg,rgba(60,50,90,0.09)_0_1px,transparent_1px_4px)]" />
      <svg className="absolute inset-0" width={shape.width} height="77" viewBox={`0 1 ${shape.width} 77`} aria-hidden="true">
        <path d={wavePath(shape.env, shape.width, seed, gain)} fill={palette.wave} stroke={palette.edge} strokeWidth=".7" />
      </svg>
      <span className={clsx("relative h-[18px] max-w-full self-start overflow-hidden rounded-[3px] px-[3px] text-[14px] leading-[17px] font-bold whitespace-nowrap text-white opacity-95", palette.tag)}>{name}</span>
      {shape.width > 40 && (
        <span className="relative flex gap-[2px] text-[14px] leading-[17px] font-bold text-white opacity-90">
          <span className={clsx("flex h-[17px] w-[16px] items-center justify-center rounded-[3px]", palette.tag)}><Fader color="#fff" /></span>
          <span className={clsx("rounded-[3px] px-[3px]", palette.tag)}>0 dB</span>
        </span>
      )}
    </div>
  );
}

const GRID_LINES = "bg-[repeating-linear-gradient(90deg,#999_0_1px,transparent_1px_131px),repeating-linear-gradient(90deg,rgba(0,0,0,0.05)_0_1px,transparent_1px_4px)] bg-[position:1px_0]";

function Lane({ track }) {
  return (
    <div className={clsx("relative min-w-0 flex-1 overflow-hidden border-t border-b-2 border-t-[#d2d2d2] border-b-[#858585] bg-[#b3b3b3]", GRID_LINES)}>
      {track.clips ? (
        <div className="relative flex pl-2">
          {clipShapes.map((shape, i) => (
            <Clip key={i} shape={shape} name={track.names[i]} palette={track.clips} seed={track.seed + i} gain={track.gain} />
          ))}
        </div>
      ) : (
        <div className="flex h-full flex-col">
          <div style={{ height: track.level }} />
          <div className="relative flex-1 border-t-[3px] border-black bg-[#7c8074]/20">
            <span className="absolute -top-[6px] -left-[4px] h-[9px] w-[8px] rounded-full border border-[#333] bg-[#ddd]" />
          </div>
        </div>
      )}
    </div>
  );
}

function EditArea() {
  const head = "flex items-center justify-center bg-[#4c4d4e] pt-px text-[12px] leading-none font-bold text-[#e2e2e2]";
  return (
    <div className="flex flex-1">
      <div className="flex min-w-0 flex-1 flex-col">
        <div className="flex h-[24px]">
          <div className="flex w-[689px] shrink-0 gap-[3px] py-[2px]">
            <div className="flex w-[218px] items-center gap-[3px] bg-[#4c4d4e] px-[3px] text-[#eee]">
              <button aria-label="Edit window view" className="flex items-center gap-[3px]">
                <Icon w={21} h={14}><rect width="21" height="14" fill="#f0f0f0" /><path d="M9 0V14M13 0V14M17 0V14" stroke="#555" strokeWidth="2" /></Icon>
                <Down w={10} h={6} />
              </button>
              <button aria-label="Timebase view" className="mr-px ml-auto flex items-center gap-[7px]"><Icon w={14} h={14}><circle cx="7" cy="7" r="6.500" fill="#4d6fb5" stroke="#26355c" /><path d="M7 2.500V7.500L10 10" stroke="#cfe0ff" fill="none" strokeWidth="1.500" /></Icon><Down w={10} h={6} /></button>
            </div>
            <div className={clsx(head, "w-[137px]")}>COMMENTS</div>
            <div className={clsx(head, "w-[102px]")}>INSERTS A-E</div>
            <div className={clsx(head, "w-[102px]")}>SENDS A-E</div>
            <div className={clsx(head, "w-[117px]")}>I / O</div>
          </div>
          <div className="w-[20px] shrink-0 bg-linear-to-b from-[#b4b4b4] to-[#8c8c8c]" />
          <div className="flex-1 bg-linear-to-b from-[#b0b0b0] to-[#8b8b8b]"><div className={clsx("h-full opacity-80", GRID_LINES)} /></div>
        </div>

        <div className="relative grid h-[768px] grid-rows-9">
          {tracks.map((t) => (
            <div key={t.name} className="flex min-w-0">
              <TrackControls track={t} />
              <Lane track={t} />
            </div>
          ))}
          {["top-[256px] h-[85px]", "top-[512px] h-[256px]"].map((span) => (
            <React.Fragment key={span}>
              <div className={clsx("absolute left-[892px] w-px bg-[#dcae4e]/80", span)} />
              <div className={clsx("absolute left-[1174px] w-px bg-[#d9b070]/50", span)} />
            </React.Fragment>
          ))}
        </div>

        <div className="flex flex-1">
          <div className="mt-1 mb-[5px] w-[709px] shrink-0 rounded-[5px] bg-[#373737]" />
          <div className="flex-1 bg-[#868686]" />
        </div>
      </div>

      <div className="flex w-[20px] shrink-0 flex-col bg-[#ababab]">
        <div className="h-[2px] bg-[#303030]" />
        <AzButton className="border-2 border-[#e0ac2c] text-[#f0c040]" />
        <button aria-label="Audio zoom" className="flex h-[28px] items-center justify-center border-b-2 border-[#868686] bg-linear-to-r from-[#bcbcbc] to-[#959595]"><WaveIcon color="#333" /></button>
        <button aria-label="MIDI zoom" className="flex h-[30px] items-center justify-center border-b-2 border-[#7a7a7a] bg-linear-to-r from-[#bcbcbc] to-[#959595]"><Icon w={14} h={9}><path d="M0 0H8V3H0ZM6 5H14V8H6Z" fill="#333" /></Icon></button>
        <div className="mt-auto h-[24px] border-t border-[#c4c4c4] bg-[#a2a2a2]" />
        <div className="h-[24px] border-t border-[#c4c4c4] bg-[#a2a2a2]" />
        <ZoomKey sign="-" /><ZoomKey sign="+" />
      </div>
    </div>
  );
}

const ZoomKey = ({ sign }) => (
  <button aria-label={sign === "+" ? "Increase" : "Decrease"} className="flex h-[20px] w-[20px] items-center justify-center border border-t-[#dadada] border-r-[#777] border-b-[#777] border-l-[#dadada] bg-[#b0b0b0]">
    <Icon w={9} h={9}><path d={sign === "+" ? "M3 0H6V3H9V6H6V9H3V6H0V3H3Z" : "M0 3H9V6H0Z"} fill="#3c3c3c" /></Icon>
  </button>
);

function BottomBar() {
  const arrow = "flex w-[23px] items-center justify-center border-r border-[#444] bg-linear-to-b from-[#8d8d8d] to-[#555]";
  return (
    <div className="flex h-[20px]">
      <button aria-label="Collapse" className="w-[709px] shrink-0 rounded-[3px] bg-[#474747] pl-[3px]"><Icon w={14} h={13}><path d="M0 0H3V13H0ZM4 6.500L9 1V5H14V8H9V12Z" fill="#bdbdbd" /></Icon></button>
      <div className="flex flex-1 bg-[#ababab]">
        <div className="h-full w-[195px] border-r border-[#555] bg-linear-to-b from-[#7a7a7a] to-[#6a6a6a]" />
      </div>
      <button aria-label="Scroll left" className={arrow}><Icon w={7} h={11}><path d="M7 0V11L0 5.500Z" fill="#e6e6e6" /></Icon></button>
      <button aria-label="Scroll right" className={arrow}><Icon w={7} h={11}><path d="M0 0V11L7 5.500Z" fill="#e6e6e6" /></Icon></button>
      <div className="flex gap-px bg-[#777]"><ZoomKey sign="-" /><ZoomKey sign="+" /></div>
      <div className="flex w-[43px] items-center bg-[#474747] pl-[5px]"><Icon w={14} h={13}><path d="M11 0H14V13H11ZM0 6.500L5 1V5H10V8H5V12Z" fill="#bdbdbd" /></Icon></div>
    </div>
  );
}

// ── App ──────────────────────────────────────────────────────────────────────
function App() {
  return (
    <div className="flex min-h-screen bg-linear-to-b from-white to-[#fcfcfc] px-[79px] pt-[52px] pb-[104px] font-['Liberation_Sans',Arial,sans-serif]">
      <div className="flex flex-1 flex-col overflow-hidden rounded-[10px] bg-[#303030] shadow-[0_0_2px_#00000066,0_30px_60px_#00000080]">
        <div className="grid h-[32px] shrink-0 grid-cols-[1fr_auto_1fr] items-center border-t border-b-2 border-t-[#c9c9c9] border-b-[#8c8da6] bg-linear-to-b from-[#e8e8e8] to-[#d0d0d0] px-[10px] pt-[2px]">
          <div className="flex gap-[11px]">
            <button aria-label="Close" className="flex h-[17px] w-[17px] items-center justify-center rounded-full border border-[#d8564a] bg-[#ec6a5e]"><span className="h-[5px] w-[5px] rounded-full bg-[#4d0a04]" /></button>
            <button aria-label="Minimize" className="h-[17px] w-[17px] rounded-full border border-[#dba53a] bg-[#f4be50]" />
            <button aria-label="Zoom window" className="h-[17px] w-[17px] rounded-full border border-[#51ae43] bg-[#62c554]" />
          </div>
          <h1 className="flex items-center gap-[9px] font-['Inter',sans-serif] text-[18px] leading-none text-[#444]">
            <Icon w={17} h={22}><path d="M0 0H13L17 4V22H0Z" fill="#85828a" /><circle cx="8.500" cy="9" r="6" fill="#aaa7b2" stroke="#ddd" /><path d="M5 13Q6 6 8.500 6Q11 6 12 13" fill="none" stroke="#fff" /><path d="M2 18.500H15" stroke="#c8c5cc" strokeWidth="2" strokeDasharray="2 .6" /></Icon>
            Edit: TM 21 String Trio MIX
          </h1>
          <span />
        </div>
        <Toolbar />
        <div className="flex flex-1 gap-[7px] pt-[6px] pr-[6px] pb-[7px] pl-[5px]">
          <Sidebar />
          <main className="relative flex min-w-0 flex-1 flex-col pt-px">
            <Rulers />
            <EditArea />
            <BottomBar />
            {/* playhead */}
            <div className="absolute top-px left-[780px] h-[119px] w-px bg-[#c8503c]" />
          </main>
        </div>
      </div>
    </div>
  );
}

export default App;
